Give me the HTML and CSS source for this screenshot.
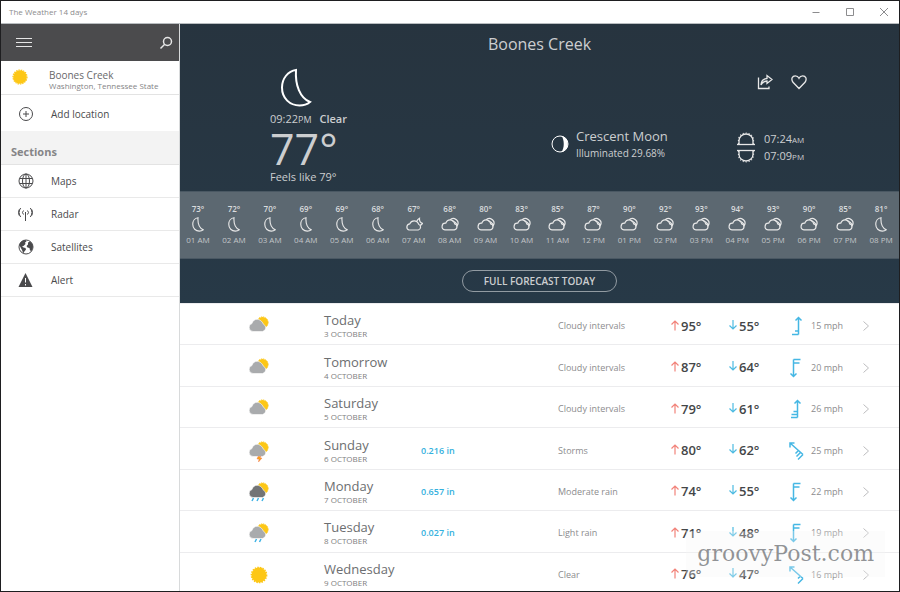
FILE: index.html
```html
<!DOCTYPE html>
<html lang="en">
<head>
<meta charset="utf-8">
<title>The Weather 14 days</title>
<link rel="stylesheet" href="styles.css">
</head>
<body>
<svg class="defs" aria-hidden="true">
  <symbol id="moon" viewBox="0 0 32 40"><path d="M16 2C8 3 2 10.500 2 19.500c0 11 8 18 17.500 18 4 0 7.500-1 10.500-3.500C20 30 15 17 16 2z"/></symbol>
  <symbol id="cloud" viewBox="0 0 18 14"><path d="M4 12.300h9.300a3 3 0 0 0 .4-5.900c-.6-2.500-2.400-4.100-4.600-4.100-2.100 0-3.700 1.300-4.300 3.400A3.300 3.300 0 0 0 4 12.300z"/><path d="M9 2.300C10.300.9 12 .6 13.600 1.100c2.800 1 4.200 3.700 3.100 6.200-.3.700-.7 1.200-1.200 1.600M10.500 2.800c2.500 1 4.600 2.600 6 4.700"/></symbol>
  <symbol id="cloudmoon" viewBox="0 0 18 14"><path d="M4 12.500h9.300a3 3 0 0 0 .4-5.700c-.8-2.300-2.500-3.500-4.600-3.500-2 0-3.600 1.100-4.300 3A3.200 3.200 0 0 0 4 12.500z"/><path d="M11.800 3.800C12.200 2.600 13 1.500 14.500.7c-.2 2.500.4 4.400 3 5.200-.6 1-1.500 1.700-2.500 2"/></symbol>
  <symbol id="sun" viewBox="0 0 20 20"><circle cx="10" cy="10" r="6.800" fill="#fdc716"/><circle cx="10" cy="10" r="7" fill="none" stroke="#fdc716" stroke-width="1.200" stroke-dasharray="1.400 1"/></symbol>
  <symbol id="suncloud" viewBox="0 0 22 20"><circle cx="14.500" cy="6.500" r="5.600" fill="#fdc716" stroke="#fdc716" stroke-dasharray="1.200 1"/><path d="M5 15.500h9.500a3.800 3.800 0 0 0 1-7.200C14 5 11.700 3.300 9 3.300 6.500 3.300 4.600 5 4 7.500a4.100 4.100 0 0 0 1 8z" fill="currentColor" stroke="#fff" stroke-width=".6"/></symbol>
  <symbol id="up" viewBox="0 0 10 12"><path d="M5 11.500V2M1.500 5.500 5 2l3.500 3.500"/></symbol>
  <symbol id="down" viewBox="0 0 10 12"><path d="M5 1v9M1.500 6.500 5 10l3.500-3.500"/></symbol>
  <symbol id="wind2" viewBox="0 0 20 20"><path d="M10.500 18.500V1.500M7.500 4.500l3-3 3 3M10.500 18.500H4M10.500 15H7"/></symbol>
  <symbol id="wind3" viewBox="0 0 20 20"><path d="M9.500 18.500V1.500M6.500 4.500l3-3 3 3M9.500 18.500H3M9.500 15.500H3.500M9.500 12.500H5.500"/></symbol>
  <symbol id="wind-s" viewBox="0 0 20 20"><path d="M5.500 1.500v17M2.500 15.500l3 3 3-3M5.500 1.500h7M5.500 5h6"/></symbol>
  <symbol id="wind-nw3" viewBox="0 0 20 20"><path d="M2 2l13 11.500M6.500 2H2v4.500M15 13.500l-5 5M12.500 11.500 8.500 15.500M10.500 9.500 7.500 12.500"/></symbol>
  <symbol id="wind-nw2" viewBox="0 0 20 20"><path d="M2 2l13 11.500M6.500 2H2v4.500M15 13.500l-5 5M12.500 11 10 13.500"/></symbol>
  <symbol id="next" viewBox="0 0 8 10"><path d="M1.500.5 6.500 5l-5 4.500"/></symbol>
</svg>
<div class="window">
  <header class="titlebar">
    <span>The Weather 14 days</span>
    <div class="controls">
      <button aria-label="Minimize"><svg viewBox="0 0 10 10"><path d="M1.500 5.500h7"/></svg></button>
      <button aria-label="Maximize"><svg viewBox="0 0 10 10"><path d="M1.500 1.500h7v7h-7z"/></svg></button>
      <button aria-label="Close"><svg viewBox="0 0 10 10"><path d="M1 1l8 8M9 1L1 9"/></svg></button>
    </div>
  </header>
  <div class="app">
    <nav class="sidebar">
      <div class="toolbar">
        <button aria-label="Menu"><svg width="16" height="10" viewBox="0 0 16 10"><path d="M0 .5h16M0 4.500h16M0 8.500h16"/></svg></button>
        <button aria-label="Search"><svg width="14" height="14" viewBox="0 0 14 14"><circle cx="8.500" cy="5.500" r="4" stroke-width="1.500"/><path d="M5.700 8.300 1.500 12.500" stroke-width="1.500"/></svg></button>
      </div>
      <a class="place" href="#"><svg class="sun"><use href="#sun"/></svg><span><b>Boones Creek</b><small>Washington, Tennessee State</small></span></a>
      <a class="item add" href="#"><svg viewBox="0 0 16 16"><circle cx="8" cy="8" r="6.500"/><path d="M8 5v6M5 8h6"/></svg>Add location</a>
      <h2>Sections</h2>
      <a class="item" href="#"><svg viewBox="0 0 16 16"><circle cx="8" cy="8" r="7"/><ellipse cx="8" cy="8" rx="3.500" ry="7"/><path d="M8 1v14M1.500 5.500h13M1.500 10.500h13"/></svg>Maps</a>
      <a class="item" href="#"><svg viewBox="0 0 16 16"><path d="M7.500 6v9M5.500 8.500a2.800 2.800 0 0 1 0-4M9.500 8.500a2.800 2.800 0 0 0 0-4M2.700 11a7 7 0 0 1 0-9M12.300 11a7 7 0 0 0 0-9M1.200 9.500a7 7 0 0 1 0-6M13.800 9.500a7 7 0 0 0 0-6"/></svg>Radar</a>
      <a class="item" href="#"><svg viewBox="0 0 16 16"><circle cx="8" cy="8" r="7"/><path class="solid" d="M1.200 6C2 3 4.500 1 7.500 1l1 1.500L7 3.500l.5 1.500L5.500 7 4 7.500l1.500 1 2 .5.500 1.500L6 13l-.5 1.500C4.500 13 4.500 11.500 3.500 10zM10 3.500 12 2.500l2.500 2.500.5 3-1.500 4-1.500-.5-.5-2.500-2-.5L8.500 7 10 5.500z"/></svg>Satellites</a>
      <a class="item" href="#"><svg viewBox="0 0 16 16"><path class="solid" d="M7.500 1 .5 15h14z"/><path class="mark" d="M7.500 6v4.500M7.500 12v1.500"/></svg>Alert</a>
    </nav>
    <main>
      <section class="now">
        <h1>Boones Creek</h1>
        <div class="actions">
          <button aria-label="Share"><svg viewBox="0 0 16 16"><path d="M1.500 3.500v11H12v-2M4 11c.3-4 2.500-6.300 6-6.500V1.500L15 5.500l-5 4V7C7.500 7 5.500 8 4 11z"/></svg></button>
          <button aria-label="Favourite"><svg viewBox="0 0 16 16"><path d="M8 14.500 2 8.300C-.3 5 1.300 1.800 4.300 1.800c1.700 0 3 1 3.700 2.500.7-1.500 2-2.500 3.700-2.500 3 0 4.600 3.200 2.300 6.500z"/></svg></button>
        </div>
        <div class="current">
          <svg class="bigmoon"><use href="#moon"/></svg>
          <p>09:22<small>PM</small> <b>Clear</b></p>
          <p class="temp">77°</p>
          <p>Feels like 79°</p>
        </div>
        <div class="phase">
          <svg viewBox="0 0 18 18"><circle cx="9" cy="9" r="8"/><path class="solid" d="M10.500.8a8.500 8.500 0 0 1 0 16.400c3-4.500 3-12 0-16.400z"/></svg>
          <div><p class="phase-name">Crescent Moon</p><p class="lit">Illuminated 29.68%</p></div>
        </div>
        <div class="suntimes">
          <p><svg viewBox="0 0 20 14"><path d="M1 12.500h18"/><path d="M3 12V8.500a7 6.500 0 0 1 14 0V12"/><path class="rays" d="M2.500 12V8a7.500 7 0 0 1 15 0v4"/></svg>07:24<small>AM</small></p>
          <p><svg viewBox="0 0 20 14"><path d="M1 1.500h18"/><path d="M3 2v3.500a7 6.500 0 0 0 14 0V2"/><path class="rays" d="M2.500 2v4a7.500 7 0 0 0 15 0V2"/></svg>07:09<small>PM</small></p>
        </div>
      </section>
      <ol class="hours">
        <li><b>73°</b><svg><use href="#moon"/></svg>01 AM</li>
        <li><b>72°</b><svg><use href="#moon"/></svg>02 AM</li>
        <li><b>70°</b><svg><use href="#moon"/></svg>03 AM</li>
        <li><b>69°</b><svg><use href="#moon"/></svg>04 AM</li>
        <li><b>69°</b><svg><use href="#moon"/></svg>05 AM</li>
        <li><b>68°</b><svg><use href="#moon"/></svg>06 AM</li>
        <li><b>67°</b><svg class="wide"><use href="#cloudmoon"/></svg>07 AM</li>
        <li><b>68°</b><svg class="wide"><use href="#cloud"/></svg>08 AM</li>
        <li><b>80°</b><svg class="wide"><use href="#cloud"/></svg>09 AM</li>
        <li><b>83°</b><svg class="wide"><use href="#cloud"/></svg>10 AM</li>
        <li><b>85°</b><svg class="wide"><use href="#cloud"/></svg>11 AM</li>
        <li><b>87°</b><svg class="wide"><use href="#cloud"/></svg>12 PM</li>
        <li><b>90°</b><svg class="wide"><use href="#cloud"/></svg>01 PM</li>
        <li><b>92°</b><svg class="wide"><use href="#cloud"/></svg>02 PM</li>
        <li><b>93°</b><svg class="wide"><use href="#cloud"/></svg>03 PM</li>
        <li><b>94°</b><svg class="wide"><use href="#cloud"/></svg>04 PM</li>
        <li><b>93°</b><svg class="wide"><use href="#cloud"/></svg>05 PM</li>
        <li><b>90°</b><svg class="wide"><use href="#cloud"/></svg>06 PM</li>
        <li><b>85°</b><svg class="wide"><use href="#cloud"/></svg>07 PM</li>
        <li><b>81°</b><svg><use href="#moon"/></svg>08 PM</li>
      </ol>
      <div class="full"><button>FULL FORECAST TODAY</button></div>
      <table class="days">
        <colgroup><col class="c-icon"><col class="c-day"><col class="c-rain"><col class="c-sky"><col class="c-temp"><col class="c-temp"><col class="c-wind"><col class="c-speed"><col class="c-next"></colgroup>
        <tbody>
        <tr><td class="icon"><svg><use href="#suncloud"/></svg></td><th scope="row">Today<small>3 OCTOBER</small></th><td class="rain"></td><td class="sky">Cloudy intervals</td><td class="hi"><svg><use href="#up"/></svg>95°</td><td class="lo"><svg><use href="#down"/></svg>55°</td><td class="wind"><svg><use href="#wind2"/></svg></td><td class="speed">15 mph</td><td class="next"><a href="#" aria-label="Today details"><svg><use href="#next"/></svg></a></td></tr>
        <tr><td class="icon"><svg><use href="#suncloud"/></svg></td><th scope="row">Tomorrow<small>4 OCTOBER</small></th><td class="rain"></td><td class="sky">Cloudy intervals</td><td class="hi"><svg><use href="#up"/></svg>87°</td><td class="lo"><svg><use href="#down"/></svg>64°</td><td class="wind"><svg><use href="#wind-s"/></svg></td><td class="speed">20 mph</td><td class="next"><a href="#" aria-label="Tomorrow details"><svg><use href="#next"/></svg></a></td></tr>
        <tr><td class="icon"><svg><use href="#suncloud"/></svg></td><th scope="row">Saturday<small>5 OCTOBER</small></th><td class="rain"></td><td class="sky">Cloudy intervals</td><td class="hi"><svg><use href="#up"/></svg>79°</td><td class="lo"><svg><use href="#down"/></svg>61°</td><td class="wind"><svg><use href="#wind3"/></svg></td><td class="speed">26 mph</td><td class="next"><a href="#" aria-label="Saturday details"><svg><use href="#next"/></svg></a></td></tr>
        <tr><td class="icon"><svg><use href="#suncloud"/><path d="M10 16.500h3l-1 1.500h2l-3.500 4 .5-3H9z" fill="#f9a51a" stroke="#ef6a4a" stroke-width=".4"/></svg></td><th scope="row">Sunday<small>6 OCTOBER</small></th><td class="rain">0.216 in</td><td class="sky">Storms</td><td class="hi"><svg><use href="#up"/></svg>80°</td><td class="lo"><svg><use href="#down"/></svg>62°</td><td class="wind"><svg><use href="#wind-nw3"/></svg></td><td class="speed">25 mph</td><td class="next"><a href="#" aria-label="Sunday details"><svg><use href="#next"/></svg></a></td></tr>
        <tr><td class="icon dark"><svg><use href="#suncloud"/><path class="drops" d="M5.500 17 4 20M10.500 17 9 20M15.500 17 14 20"/></svg></td><th scope="row">Monday<small>7 OCTOBER</small></th><td class="rain">0.657 in</td><td class="sky">Moderate rain</td><td class="hi"><svg><use href="#up"/></svg>74°</td><td class="lo"><svg><use href="#down"/></svg>55°</td><td class="wind"><svg><use href="#wind-s"/></svg></td><td class="speed">22 mph</td><td class="next"><a href="#" aria-label="Monday details"><svg><use href="#next"/></svg></a></td></tr>
        <tr><td class="icon"><svg><use href="#suncloud"/><path class="drops" d="M8.500 17 7 20M13 17l-1.500 3"/></svg></td><th scope="row">Tuesday<small>8 OCTOBER</small></th><td class="rain">0.027 in</td><td class="sky">Light rain</td><td class="hi"><svg><use href="#up"/></svg>71°</td><td class="lo"><svg><use href="#down"/></svg>48°</td><td class="wind"><svg><use href="#wind-s"/></svg></td><td class="speed">19 mph</td><td class="next"><a href="#" aria-label="Tuesday details"><svg><use href="#next"/></svg></a></td></tr>
        <tr><td class="icon"><svg><use href="#sun"/></svg></td><th scope="row">Wednesday<small>9 OCTOBER</small></th><td class="rain"></td><td class="sky">Clear</td><td class="hi"><svg><use href="#up"/></svg>76°</td><td class="lo"><svg><use href="#down"/></svg>47°</td><td class="wind"><svg><use href="#wind-nw2"/></svg></td><td class="speed">16 mph</td><td class="next"><a href="#" aria-label="Wednesday details"><svg><use href="#next"/></svg></a></td></tr>
        </tbody>
      </table>
    </main>
  </div>
  <div class="watermark">groovyPost.com</div>
</div>
</body>
</html>
```
FILE: styles.css
```css
* { box-sizing: border-box; }
body {
  margin: 0;
  font: 10px/16px "Open Sans", "Noto Sans", sans-serif;
  color: #4a4a4c;
  background: #fff;
}
.defs { display: none; }
p, h1, h2, ol { margin: 0; padding: 0; }
a { color: inherit; text-decoration: none; }
button { border: 0; padding: 0; background: none; color: inherit; font: inherit; }
svg { display: block; fill: none; stroke: currentColor; flex: none; }
b { font-weight: 600; }
.solid { fill: currentColor; stroke: none; }

.window {
  position: relative;
  display: flex;
  flex-direction: column;
  height: 100vh;
  overflow: hidden;
  border: 1px solid #1e1e20;
}
.titlebar {
  display: flex;
  flex: none;
  align-items: center;
  justify-content: space-between;
  height: 23px;
  padding: 0 10px 0 8px;
  font-size: 8px;
  color: #8c8c8e;
  border-bottom: 1px solid #b9bdc0;
}
.controls { display: flex; gap: 24px; }
.controls svg { width: 10px; height: 10px; }

.app { display: flex; flex: 1; min-height: 0; }
.sidebar { flex: none; width: 179px; border-right: 1px solid #d8dadb; }
.toolbar {
  display: flex;
  align-items: center;
  justify-content: space-between;
  height: 37px;
  padding: 0 6px 0 15px;
  background: #4b4b4d;
  color: #e6e6e6;
}
.place {
  display: flex;
  gap: 19px;
  height: 34px;
  padding: 6px 0 0 9px;
  border-bottom: 1px solid #e3e3e3;
  color: #68686a;
}
.place b, .place small { display: block; font-weight: 400; }
.place b { font-size: 10px; line-height: 16px; }
.place small { font-size: 8px; line-height: 6px; color: #848486; }
.sun { width: 20px; height: 20px; stroke: none; }
.item {
  display: flex;
  align-items: center;
  gap: 17px;
  height: 33px;
  padding-left: 17px;
  border-bottom: 1px solid #e9e9e9;
}
.item svg { width: 16px; height: 16px; }
.add { height: 36px; padding-top: 2px; border: 0; }
.mark { stroke: #fff; }
h2 {
  height: 34px;
  padding: 12px 10px 0;
  font-size: 11px;
  line-height: 18px;
  color: #858587;
  background: #f3f3f3;
  border-bottom: 1px solid #e3e3e3;
}

main { flex: 1; min-width: 0; background: linear-gradient(#27343f, #273947 280px); color: #ccced0; }
.now {
  display: grid;
  grid-template-columns: 281px 90px 1fr 70px 93px;
  grid-template-rows: 44px 28px 1fr;
  height: 167px;
  padding-left: 90px;
}
h1 {
  grid-column: 1 / -1;
  margin-left: -90px;
  padding-top: 8px;
  font-size: 16px;
  line-height: 24px;
  font-weight: 400;
  text-align: center;
}
.actions {
  grid-area: 2 / 4 / 3 / 6;
  display: flex;
  align-items: center;
  gap: 18px;
  padding-left: 21px;
  color: #e8e8e8;
}
.actions svg { width: 16px; height: 16px; stroke-width: 1.3; }
.current { grid-area: 2 / 1 / 4 / 2; font-size: 11px; line-height: 16px; }
.current small { font-size: 9px; }
.current b { margin-left: 5px; }
.bigmoon { width: 32px; height: 40px; margin-left: 10px; margin-bottom: 3px; color: #fff; stroke-width: 2; }
.current .temp { font-size: 43px; line-height: 41px; }
.phase { grid-area: 3 / 2 / 4 / 4; display: flex; align-items: flex-start; gap: 7px; padding-top: 31px; }
.phase svg { width: 18px; height: 18px; margin-top: 8px; color: #fff; stroke-width: 1; }
.phase-name { font-size: 13px; line-height: 18px; }
.phase .lit { line-height: 16px; }
.suntimes { grid-area: 3 / 4 / 4 / 6; padding-top: 34px; font-size: 11px; line-height: 17px; }
.suntimes p { display: flex; align-items: baseline; height: 17px; }
.suntimes svg { align-self: center; width: 20px; height: 14px; margin-right: 8px; color: #e8e8e8; stroke-width: 1.3; }
.suntimes .rays { stroke-width: 1.2; stroke-dasharray: 1 2; }
.suntimes small { font-size: 8px; }

.hours {
  display: grid;
  grid-template-columns: repeat(20, 1fr);
  height: 68px;
  padding-top: 11px;
  list-style: none;
  font-size: 8px;
  line-height: 12px;
  text-align: center;
  white-space: nowrap;
  color: #c2c5c8;
  background: #5c6871;
  border: solid #4a5863;
  border-width: 1px 0;
}
.hours b { display: block; color: #dadcde; }
.hours svg { width: 12px; height: 15px; margin: 2px auto; color: #e8e8e8; stroke-width: 3; }
.hours .wide { width: 18px; stroke-width: 1.2; }
.full { display: flex; align-items: center; justify-content: center; height: 44px; }
.full button {
  height: 22px;
  padding: 0 21px;
  border: 1px solid #929ba2;
  border-radius: 11px;
  font-weight: 600;
}

.days {
  width: 100%;
  height: 290px;
  table-layout: fixed;
  border-collapse: collapse;
  background: #fff;
  color: #8c8c8e;
  font-size: 9px;
  line-height: 12px;
}
.c-icon { width: 144px; }
.c-day { width: 97px; }
.c-rain { width: 137px; }
.c-temp { width: 58px; }
.c-wind { width: 25px; }
.c-speed { width: 51px; }
.c-next { width: 37px; }
.days td, .days th { padding: 4px 0 0; text-align: left; vertical-align: middle; white-space: nowrap; }
.days tr { border-top: 1px solid #ececee; }
.icon svg { width: 22px; height: 22px; margin-left: 68px; color: #a9abad; stroke: none; }
.icon.dark svg { color: #727476; }
.icon .drops { stroke: #41b4e6; stroke-width: 1.5; }
.days th { font-size: 13px; line-height: 16px; font-weight: 400; color: #6c6e70; }
.days th small { display: block; font-size: 8px; line-height: 12px; color: #7e7e80; }
.days .rain { font-weight: 600; color: #35b1de; }
.days .hi, .days .lo { padding-top: 2px; font-size: 13px; font-weight: 600; color: #444648; }
.hi svg, .lo svg { display: inline-block; width: 10px; height: 12px; margin-right: 1px; color: #f2837a; stroke-width: 1.2; }
.lo svg { color: #4dbbe2; }
.wind svg { width: 20px; height: 20px; margin-left: 2px; color: #45b7e4; stroke-width: 1.5; }
.next svg { width: 8px; height: 10px; color: #bcbcbe; }

.watermark {
  position: absolute;
  right: 14px;
  bottom: 14px;
  padding: 8px 11px;
  font: 22px/30px "DejaVu Serif", serif;
  color: rgba(110, 112, 116, .75);
  background: rgba(245, 245, 245, .3);
}
```
